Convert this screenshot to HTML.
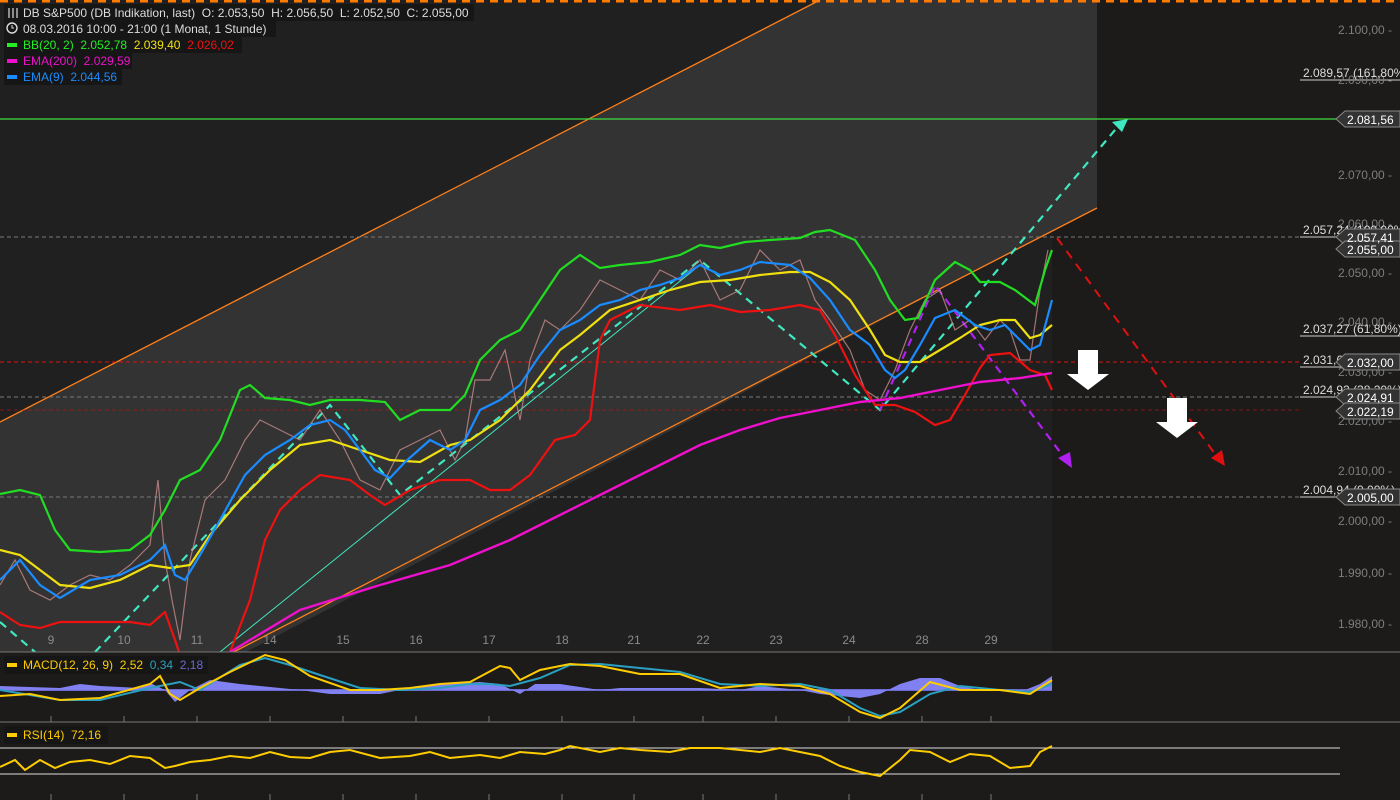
<!DOCTYPE html>
<html><head><meta charset="utf-8"><style>
html,body{margin:0;padding:0;background:#1c1b1a;width:1400px;height:800px;overflow:hidden;font-family:"Liberation Sans",sans-serif}
svg{display:block}
text{font-family:"Liberation Sans",sans-serif;white-space:pre}
</style></head><body>
<svg width="1400" height="800" viewBox="0 0 1400 800" xmlns="http://www.w3.org/2000/svg" xml:space="preserve">
<rect width="1400" height="800" fill="#1c1b1a"/>
<rect x="0" y="0" width="1052" height="652" fill="#202020"/>
<polygon points="0,422 820,0 1097,0 1097,208 246,652 0,652" fill="#333333"/>
<line x1="0" y1="1" x2="1400" y2="1" stroke="#ff7a00" stroke-width="3" stroke-dasharray="8,6"/>
<line x1="0" y1="422" x2="820" y2="0" stroke="#ff7f1a" stroke-width="1.3"/>
<line x1="1097" y1="208" x2="218" y2="660" stroke="#ff7f1a" stroke-width="1.3"/>
<line x1="0" y1="119" x2="1340" y2="119" stroke="#3fdc3f" stroke-width="1.2"/>
<line x1="0" y1="237" x2="1300" y2="237" stroke="#7a7a7a" stroke-dasharray="4,3"/>
<line x1="0" y1="362" x2="1300" y2="362" stroke="#e01010" stroke-dasharray="4,3"/>
<line x1="0" y1="397" x2="1300" y2="397" stroke="#7a7a7a" stroke-dasharray="4,3"/>
<line x1="0" y1="410" x2="1300" y2="410" stroke="#d01010" stroke-dasharray="4,3" stroke-opacity=".6"/>
<line x1="0" y1="497" x2="1300" y2="497" stroke="#7a7a7a" stroke-dasharray="4,3"/>
<line x1="1300" y1="80" x2="1400" y2="80" stroke="#ccc"/>
<line x1="1300" y1="237" x2="1400" y2="237" stroke="#ccc"/>
<line x1="1300" y1="336" x2="1400" y2="336" stroke="#ccc"/>
<line x1="1300" y1="367" x2="1400" y2="367" stroke="#ccc"/>
<line x1="1300" y1="397" x2="1400" y2="397" stroke="#ccc"/>
<line x1="1300" y1="497" x2="1400" y2="497" stroke="#ccc"/>
<g stroke="#40e8c0" stroke-width="2.2" fill="none" stroke-dasharray="8,6">
<polyline points="0,622 35,652"/>
<polyline points="95,652 330,405 400,495 700,260 880,410 1120,124"/>
</g>
<polygon points="1128,119 1112,122 1122,132" fill="#40e8c0"/>
<line x1="220" y1="652" x2="700" y2="265" stroke="#40e8c0" stroke-width="1"/>
<polyline points="880,410 935,285 1066,460" stroke="#b020f0" stroke-width="2.2" fill="none" stroke-dasharray="8,6"/>
<polygon points="1072,468 1058,458 1070,452" fill="#b020f0"/>
<polyline points="1057,238 1218,458" stroke="#e01010" stroke-width="2" fill="none" stroke-dasharray="9,7"/>
<polygon points="1225,466 1211,458 1222,450" fill="#e01010"/>
<polygon points="1078,350 1098,350 1098,374 1109,374 1088,390 1067,374 1078,374" fill="#fff"/>
<polygon points="1167,398 1187,398 1187,422 1198,422 1177,438 1156,422 1167,422" fill="#fff"/>
<polyline fill="none" stroke="#d09090" stroke-width="1.2" stroke-opacity=".75" points="0,585 15,560 30,590 50,600 70,585 90,575 110,580 130,565 150,545 158,480 165,560 172,600 180,640 190,560 205,500 225,480 245,440 260,420 280,430 300,440 320,410 340,440 360,480 380,490 400,450 420,440 440,430 455,460 465,440 475,380 490,380 505,350 520,420 530,360 545,320 560,330 580,310 600,280 620,290 640,300 660,270 680,280 700,260 720,300 740,290 760,250 780,270 800,260 815,300 830,320 850,350 865,390 880,400 895,370 910,330 925,300 940,290 955,330 970,320 985,340 1000,320 1010,330 1020,360 1030,360 1040,290 1048,250"/>
<polyline fill="none" stroke="#22dd22" stroke-width="2.2" points="0,494 20,490 40,495 55,530 70,550 100,552 130,550 150,535 165,510 180,480 200,470 220,440 240,390 250,385 265,398 290,400 310,405 330,400 360,400 385,402 400,420 420,410 450,410 465,395 480,360 500,340 520,330 540,300 560,270 580,255 600,268 620,265 650,262 680,255 700,245 720,248 745,242 770,240 800,238 815,232 830,230 855,240 875,270 890,300 905,320 918,318 935,280 955,262 970,270 980,282 1000,282 1015,290 1035,305 1045,270 1052,250"/>
<polyline fill="none" stroke="#f0e010" stroke-width="2.2" points="0,550 20,555 40,570 60,585 90,588 120,580 150,565 170,568 190,565 210,535 240,500 270,470 300,445 330,440 360,450 390,460 420,462 450,445 470,440 500,420 530,390 560,350 580,335 610,310 640,300 670,290 700,282 730,280 760,275 790,272 810,272 830,282 850,300 870,330 885,355 900,362 920,362 940,350 960,338 980,325 1000,320 1015,320 1030,338 1040,335 1052,325"/>
<polyline fill="none" stroke="#ee1111" stroke-width="2.2" points="0,612 20,625 40,628 60,622 100,622 130,622 150,625 165,612 175,640 180,655"/>
<polyline fill="none" stroke="#ee1111" stroke-width="2.2" points="230,652 250,600 265,540 280,510 300,490 320,475 350,480 370,495 385,505 410,490 440,480 470,480 490,490 510,490 530,475 555,440 575,435 590,420 600,340 610,320 640,305 680,310 710,305 740,312 770,310 800,305 820,310 835,335 855,375 875,405 895,405 915,412 935,425 950,420 965,395 980,368 990,355 1010,353 1030,370 1045,375 1052,390"/>
<polyline fill="none" stroke="#1a8cff" stroke-width="2.2" points="0,580 20,560 40,585 60,598 90,580 120,575 150,560 165,545 175,575 185,580 200,555 220,520 245,475 265,455 290,440 310,425 330,420 345,430 360,450 375,470 390,478 405,462 430,440 450,450 465,440 480,410 500,400 520,385 540,355 560,330 580,320 600,305 620,300 640,290 660,285 680,278 700,265 720,275 740,270 760,262 790,265 810,278 830,300 850,330 870,345 885,370 895,378 905,370 920,345 935,318 955,310 975,325 990,330 1005,325 1015,335 1030,350 1040,345 1052,300"/>
<polyline fill="none" stroke="#ee10cc" stroke-width="2.4" points="230,652 300,610 380,585 450,565 510,540 560,515 610,490 660,465 700,445 740,430 780,418 820,410 860,402 900,398 940,390 980,382 1020,378 1052,373"/>
<g fill="#7d7d7d" font-size="12" text-anchor="end">
<text x="1392" y="34">2.100,00 -</text>
<text x="1392" y="84">2.090,00 -</text>
<text x="1392" y="179">2.070,00 -</text>
<text x="1392" y="228">2.060,00 -</text>
<text x="1392" y="277">2.050,00 -</text>
<text x="1392" y="326">2.040,00 -</text>
<text x="1392" y="376">2.030,00 -</text>
<text x="1392" y="425">2.020,00 -</text>
<text x="1392" y="475">2.010,00 -</text>
<text x="1392" y="525">2.000,00 -</text>
<text x="1392" y="577">1.990,00 -</text>
<text x="1392" y="628">1.980,00 -</text>
</g>
<g fill="#ddd" font-size="12">
<text x="1303" y="77">2.089,57 (161,80%)</text>
<text x="1303" y="234">2.057,24 (100,00%)</text>
<text x="1303" y="333">2.037,27 (61,80%)</text>
<text x="1303" y="364">2.031,6</text>
<text x="1303" y="394">2.024,92 (38,20%)</text>
<text x="1303" y="494">2.004,94 (0,00%)</text>
</g>
<g fill="#333" stroke="#888" stroke-width="1">
<polygon points="1336,119 1345,111 1400,111 1400,127 1345,127"/>
<polygon points="1336,237 1345,229 1400,229 1400,245 1345,245"/>
<polygon points="1336,249 1345,241 1400,241 1400,257 1345,257"/>
<polygon points="1336,362 1345,354 1400,354 1400,370 1345,370"/>
<polygon points="1336,397 1345,389 1400,389 1400,405 1345,405"/>
<polygon points="1336,411 1345,403 1400,403 1400,419 1345,419"/>
<polygon points="1336,497 1345,489 1400,489 1400,505 1345,505"/>
<polygon points="1336,748 1345,740 1400,740 1400,756 1345,756"/>
<polygon points="1336,774 1345,766 1400,766 1400,782 1345,782"/>
</g>
<g fill="#fff" font-size="12">
<text x="1347" y="124">2.081,56</text>
<text x="1347" y="242">2.057,41</text>
<text x="1347" y="254">2.055,00</text>
<text x="1347" y="367">2.032,00</text>
<text x="1347" y="402">2.024,91</text>
<text x="1347" y="416">2.022,19</text>
<text x="1347" y="502">2.005,00</text>
<text x="1360" y="753">70,00</text>
<text x="1360" y="779">30,00</text>
</g>
<g fill="#7d7d7d" font-size="12" text-anchor="end">
<text x="1392" y="693">0,00 -</text>
<text x="1392" y="732">100,00</text>
<text x="1392" y="797">0,00 -</text>
</g>
<g fill="#8a8a8a" font-size="12" text-anchor="middle">
<text x="51" y="644">9</text><text x="124" y="644">10</text><text x="197" y="644">11</text><text x="270" y="644">14</text><text x="343" y="644">15</text><text x="416" y="644">16</text><text x="489" y="644">17</text><text x="562" y="644">18</text><text x="634" y="644">21</text><text x="703" y="644">22</text><text x="776" y="644">23</text><text x="849" y="644">24</text><text x="922" y="644">28</text><text x="991" y="644">29</text>
</g>
<rect x="0" y="652" width="1400" height="148" fill="#1c1b1a"/>
<line x1="0" y1="652" x2="1400" y2="652" stroke="#777"/>
<line x1="0" y1="722" x2="1400" y2="722" stroke="#777"/>
<g stroke="#777">
<line x1="51" y1="716" x2="51" y2="722"/><line x1="124" y1="716" x2="124" y2="722"/><line x1="197" y1="716" x2="197" y2="722"/><line x1="270" y1="716" x2="270" y2="722"/><line x1="343" y1="716" x2="343" y2="722"/><line x1="416" y1="716" x2="416" y2="722"/><line x1="489" y1="716" x2="489" y2="722"/><line x1="562" y1="716" x2="562" y2="722"/><line x1="634" y1="716" x2="634" y2="722"/><line x1="703" y1="716" x2="703" y2="722"/><line x1="776" y1="716" x2="776" y2="722"/><line x1="849" y1="716" x2="849" y2="722"/><line x1="922" y1="716" x2="922" y2="722"/><line x1="991" y1="716" x2="991" y2="722"/>
<line x1="51" y1="794" x2="51" y2="800"/><line x1="124" y1="794" x2="124" y2="800"/><line x1="197" y1="794" x2="197" y2="800"/><line x1="270" y1="794" x2="270" y2="800"/><line x1="343" y1="794" x2="343" y2="800"/><line x1="416" y1="794" x2="416" y2="800"/><line x1="489" y1="794" x2="489" y2="800"/><line x1="562" y1="794" x2="562" y2="800"/><line x1="634" y1="794" x2="634" y2="800"/><line x1="703" y1="794" x2="703" y2="800"/><line x1="776" y1="794" x2="776" y2="800"/><line x1="849" y1="794" x2="849" y2="800"/><line x1="922" y1="794" x2="922" y2="800"/><line x1="991" y1="794" x2="991" y2="800"/>
</g>
<line x1="0" y1="690" x2="1052" y2="690" stroke="#6a6ad0" stroke-width="2"/>
<polygon fill="#8080f0" points="0,686 60,688 80,684 100,686 140,688 150,683 165,690 175,702 190,690 210,680 240,684 300,690 330,694 380,694 420,686 450,684 480,682 500,684 520,694 535,684 560,684 600,690 620,688 700,688 740,690 760,686 800,690 820,694 860,698 880,694 900,684 920,678 940,678 960,686 980,690 1020,692 1040,684 1052,676 1052,690 0,690"/>
<polyline fill="none" stroke="#2aa0c0" stroke-width="2" points="0,690 60,700 100,700 150,688 180,682 200,690 240,665 265,658 290,665 320,675 360,688 400,690 440,688 470,684 490,684 510,686 540,678 570,665 600,664 640,668 680,672 720,684 760,686 800,684 830,690 860,708 880,716 900,712 930,694 960,686 1000,690 1030,692 1052,684"/>
<polyline fill="none" stroke="#ffcc00" stroke-width="2" points="0,696 30,694 60,700 100,698 150,684 160,676 170,694 180,700 200,688 230,672 265,655 285,660 310,676 350,690 380,690 410,688 440,684 470,682 500,666 510,668 520,680 540,670 570,664 600,666 640,674 680,674 720,688 760,684 800,686 830,694 860,712 880,718 900,708 930,682 960,690 1000,690 1030,694 1052,680"/>
<line x1="0" y1="748" x2="1340" y2="748" stroke="#ddd"/>
<line x1="0" y1="774" x2="1340" y2="774" stroke="#ddd"/>
<polyline fill="none" stroke="#ffcc00" stroke-width="2" points="0,767 15,760 25,770 40,760 55,768 70,762 90,760 110,764 130,756 150,758 165,768 175,766 190,762 210,760 230,756 250,758 270,752 290,757 310,758 330,752 350,750 380,758 410,756 430,752 450,758 480,755 500,758 520,752 545,754 560,750 570,746 600,752 620,748 640,750 670,752 690,748 720,748 740,750 760,752 780,748 800,752 820,756 840,766 860,772 880,776 900,760 910,750 930,752 950,762 970,754 990,756 1010,768 1030,766 1040,752 1052,746"/>
<rect x="4" y="4" width="470" height="17" fill="#161616"/>
<rect x="4" y="21" width="272" height="16" fill="#161616"/>
<rect x="4" y="37" width="238" height="16" fill="#161616"/>
<rect x="4" y="53" width="128" height="16" fill="#161616"/>
<rect x="4" y="69" width="118" height="16" fill="#161616"/>
<g stroke="#ddd" stroke-width="1.2"><line x1="9" y1="8" x2="9" y2="18"/><line x1="13" y1="8" x2="13" y2="18"/><line x1="17" y1="8" x2="17" y2="18"/></g>
<circle cx="12" cy="28" r="5" fill="none" stroke="#ddd" stroke-width="1.4"/><path d="M12 25v3h2" stroke="#ddd" fill="none"/>
<g font-size="12">
<text x="23" y="17" fill="#ddd">DB S&amp;P500 (DB Indikation, last)  O: 2.053,50  H: 2.056,50  L: 2.052,50  C: 2.055,00</text>
<text x="23" y="33" fill="#ddd">08.03.2016 10:00 - 21:00 (1 Monat, 1 Stunde)</text>
<rect x="7" y="43" width="10" height="4" fill="#22ee22"/>
<text x="23" y="49" fill="#22ee22">BB(20, 2)  2.052,78  <tspan fill="#f0e010">2.039,40</tspan>  <tspan fill="#ee1111">2.026,02</tspan></text>
<rect x="7" y="59" width="10" height="4" fill="#ee10cc"/>
<text x="23" y="65" fill="#ee10cc">EMA(200)  2.029,59</text>
<rect x="7" y="75" width="10" height="4" fill="#1a8cff"/>
<text x="23" y="81" fill="#1a8cff">EMA(9)  2.044,56</text>
</g>
<rect x="4" y="656" width="204" height="18" fill="#161616"/>
<rect x="7" y="663" width="10" height="4" fill="#ffcc00"/>
<text x="23" y="669" font-size="12" fill="#ffcc00">MACD(12, 26, 9)  2,52  <tspan fill="#2aa0c0">0,34</tspan>  <tspan fill="#6a6ad0">2,18</tspan></text>
<rect x="4" y="726" width="104" height="18" fill="#161616"/>
<rect x="7" y="733" width="10" height="4" fill="#ffcc00"/>
<text x="23" y="739" font-size="12" fill="#ffcc00">RSI(14)  72,16</text>
</svg>
</body></html>
